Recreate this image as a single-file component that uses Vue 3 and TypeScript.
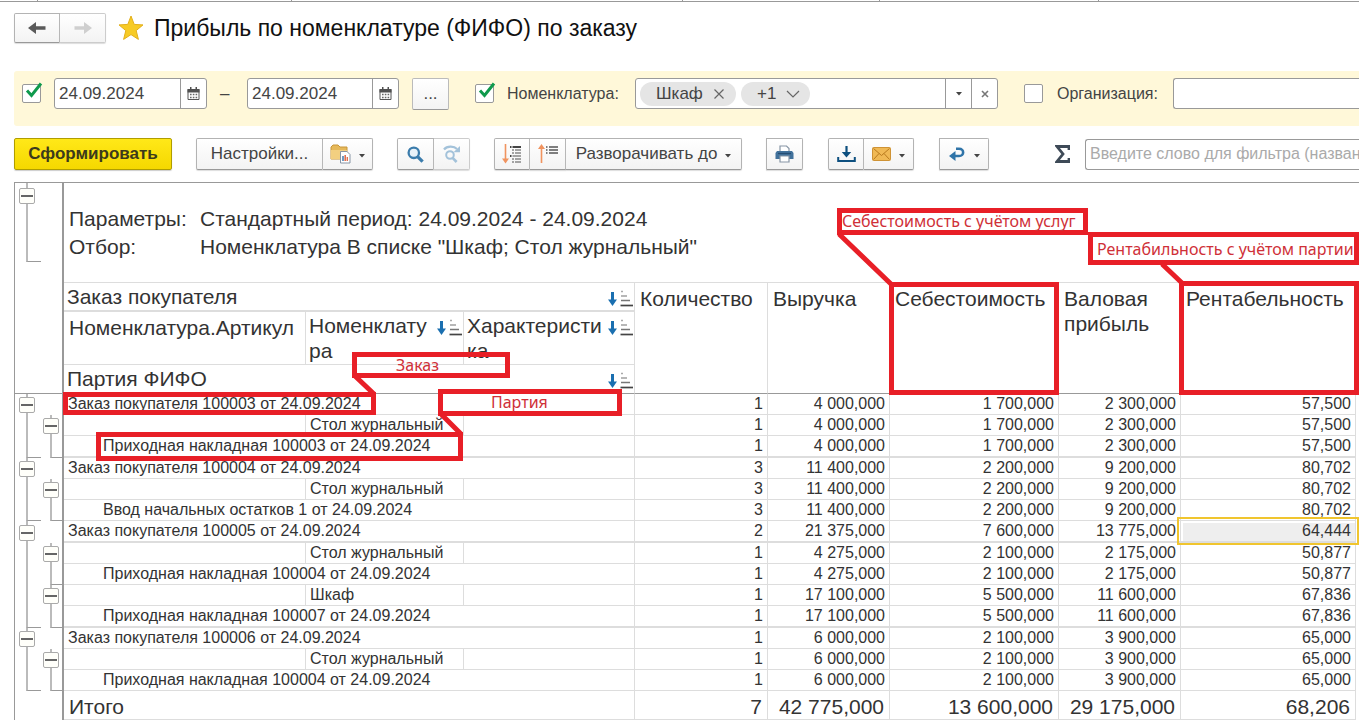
<script setup lang="ts">
interface Row {
  level: 1 | 2 | 3
  label: string
  values: string[]
  outer: 'start' | 'mid' | 'end'
  inner: 'none' | 'start' | 'end'
  selected?: boolean
}

const row = (level: Row['level'], label: string, outer: Row['outer'], inner: Row['inner'], ...values: string[]): Row => ({
  level,
  label,
  outer,
  inner,
  values,
})

const rows: Row[] = [
  row(1, 'Заказ покупателя 100003 от 24.09.2024', 'start', 'none', '1', '4 000,000', '1 700,000', '2 300,000', '57,500'),
  row(2, 'Стол журнальный', 'mid', 'start', '1', '4 000,000', '1 700,000', '2 300,000', '57,500'),
  row(3, 'Приходная накладная 100003 от 24.09.2024', 'end', 'end', '1', '4 000,000', '1 700,000', '2 300,000', '57,500'),
  row(1, 'Заказ покупателя 100004 от 24.09.2024', 'start', 'none', '3', '11 400,000', '2 200,000', '9 200,000', '80,702'),
  row(2, 'Стол журнальный', 'mid', 'start', '3', '11 400,000', '2 200,000', '9 200,000', '80,702'),
  row(3, 'Ввод начальных остатков 1 от 24.09.2024', 'end', 'end', '3', '11 400,000', '2 200,000', '9 200,000', '80,702'),
  { ...row(1, 'Заказ покупателя 100005 от 24.09.2024', 'start', 'none', '2', '21 375,000', '7 600,000', '13 775,000', '64,444'), selected: true },
  row(2, 'Стол журнальный', 'mid', 'start', '1', '4 275,000', '2 100,000', '2 175,000', '50,877'),
  row(3, 'Приходная накладная 100004 от 24.09.2024', 'mid', 'end', '1', '4 275,000', '2 100,000', '2 175,000', '50,877'),
  row(2, 'Шкаф', 'mid', 'start', '1', '17 100,000', '5 500,000', '11 600,000', '67,836'),
  row(3, 'Приходная накладная 100007 от 24.09.2024', 'end', 'end', '1', '17 100,000', '5 500,000', '11 600,000', '67,836'),
  row(1, 'Заказ покупателя 100006 от 24.09.2024', 'start', 'none', '1', '6 000,000', '2 100,000', '3 900,000', '65,000'),
  row(2, 'Стол журнальный', 'mid', 'start', '1', '6 000,000', '2 100,000', '3 900,000', '65,000'),
  row(3, 'Приходная накладная 100004 от 24.09.2024', 'end', 'end', '1', '6 000,000', '2 100,000', '3 900,000', '65,000'),
]

const thickRows = [2, 6, 10]
const totals = ['7', '42 775,000', '13 600,000', '29 175,000', '68,206']
</script>

<template>
  <div class="page">
    <div class="tabs">
      <span class="tab first"></span><span class="tab second"></span><span class="tab third"></span><span class="tab fourth"></span><span class="tab fifth"></span>
    </div>

    <header class="title-bar">
      <div class="group nav">
        <button class="btn" type="button" aria-label="Назад">
          <svg width="18" height="14" viewBox="0 0 18 14"><path d="M0 7 L8 1 V5.2 H17.5 V8.8 H8 V13 Z" fill="#5a5a5a" /></svg>
        </button>
        <button class="btn light" type="button" aria-label="Вперед">
          <svg width="18" height="14" viewBox="0 0 18 14"><path d="M18 7 L10 1 V5.2 H0.5 V8.8 H10 V13 Z" fill="#cfcfcf" /></svg>
        </button>
      </div>
      <svg class="star" width="26" height="26" viewBox="0 0 26 26">
        <path d="M13 1 L16.2 9.4 L25 9.9 L18.2 15.6 L20.4 24.4 L13 19.6 L5.6 24.4 L7.8 15.6 L1 9.9 L9.8 9.4 Z" fill="#f7cb25" stroke="#e3b01c" stroke-width="1" />
      </svg>
      <h1>Прибыль по номенклатуре (ФИФО) по заказу</h1>
    </header>

    <section class="filters">
      <span class="check">
        <input type="checkbox" checked aria-label="Период" />
        <svg width="18" height="18" viewBox="0 0 18 18"><path d="M2 8.5 L6.5 13.5 L16 1.5" fill="none" stroke="#0f9a4c" stroke-width="3" /></svg>
      </span>
      <div class="field date">
        <input type="text" value="24.09.2024" aria-label="Начало периода" />
        <button type="button" aria-label="Выбрать дату">
          <svg width="13" height="14" viewBox="0 0 13 14"><path d="M1 2.5 H12 V12.5 H1 Z" fill="#fff" stroke="#555" /><path d="M0.5 2 H12.5 V5.5 H0.5 Z M3 0 H4.5 V3 H3 Z M8.5 0 H10 V3 H8.5 Z" fill="#505050" /><path d="M3 7.5 H10.5 M3 10.5 H10.5" stroke="#666" stroke-width="1.6" stroke-dasharray="1.6 1.2" /></svg>
        </button>
      </div>
      <span class="dash">–</span>
      <div class="field date">
        <input type="text" value="24.09.2024" aria-label="Конец периода" />
        <button type="button" aria-label="Выбрать дату">
          <svg width="13" height="14" viewBox="0 0 13 14"><path d="M1 2.5 H12 V12.5 H1 Z" fill="#fff" stroke="#555" /><path d="M0.5 2 H12.5 V5.5 H0.5 Z M3 0 H4.5 V3 H3 Z M8.5 0 H10 V3 H8.5 Z" fill="#505050" /><path d="M3 7.5 H10.5 M3 10.5 H10.5" stroke="#666" stroke-width="1.6" stroke-dasharray="1.6 1.2" /></svg>
        </button>
      </div>
      <button class="more" type="button">...</button>
      <span class="check item">
        <input id="use-item" type="checkbox" checked />
        <svg width="18" height="18" viewBox="0 0 18 18"><path d="M2 8.5 L6.5 13.5 L16 1.5" fill="none" stroke="#0f9a4c" stroke-width="3" /></svg>
      </span>
      <label class="item-label" for="use-item">Номенклатура:</label>
      <div class="field list">
        <div class="chips">
          <span class="chip">Шкаф
            <button type="button" aria-label="Убрать"><svg width="10" height="10" viewBox="0 0 10 10"><path d="M0.5 0.5 L9.5 9.5 M9.5 0.5 L0.5 9.5" stroke="#666" stroke-width="1.2" /></svg></button>
          </span>
          <span class="chip plus">+1
            <button type="button" aria-label="Показать все"><svg width="14" height="8" viewBox="0 0 14 8"><path d="M1 1 L7 7 L13 1" fill="none" stroke="#666" stroke-width="1.2" /></svg></button>
          </span>
        </div>
        <button type="button" aria-label="Открыть список"><svg width="6" height="4" viewBox="0 0 6 4"><path d="M0 0 H6 L3 3.6 Z" fill="#444" /></svg></button>
        <button type="button" aria-label="Очистить"><svg width="8" height="8" viewBox="0 0 8 8"><path d="M1 1 L7 7 M7 1 L1 7" stroke="#777" stroke-width="1.6" /></svg></button>
      </div>
      <span class="check org"><input id="use-org" type="checkbox" /></span>
      <label class="org-label" for="use-org">Организация:</label>
      <div class="field org-field"><input type="text" aria-label="Значение организации" /></div>
    </section>

    <nav class="toolbar">
      <button class="run" type="button">Сформировать</button>
      <div class="group settings">
        <button class="btn text-btn" type="button">Настройки...</button>
        <button class="btn drop" type="button" aria-label="Варианты отчета">
          <svg width="21" height="20" viewBox="0 0 21 20"><path d="M1 3 L3 1 H8 L10 3 H17 V15 H1 Z" fill="#e6b95a" stroke="#c8963a" /><path d="M1 6 H17 L16 15 H1 Z" fill="#f2cf80" /><path d="M10.5 7.5 H17 L20 10.5 V19 H10.5 Z" fill="#fff" stroke="#8795a5" /><path d="M13 12 V17" stroke="#4a82b5" stroke-width="1.6" /><path d="M15.2 11 V17" stroke="#e07050" stroke-width="1.6" /><path d="M17.3 13 V17" stroke="#e07050" stroke-width="1.4" /></svg>
          <svg class="caret" width="6" height="4" viewBox="0 0 6 4"><path d="M0 0 H6 L3 3.4 Z" fill="#444" /></svg>
        </button>
      </div>
      <div class="group search">
        <button class="btn" type="button" aria-label="Найти">
          <svg width="17" height="17" viewBox="0 0 17 17"><circle cx="6.8" cy="6.8" r="5.2" fill="#e8f2f9" stroke="#3b7cac" stroke-width="2.3" /><path d="M10.6 10.6 L15.6 15.6" stroke="#3b7cac" stroke-width="3.2" /></svg>
        </button>
        <button class="btn light" type="button" aria-label="Найти далее">
          <svg width="18" height="18" viewBox="0 0 18 18"><circle cx="7" cy="10" r="3.8" fill="none" stroke="#a3c2da" stroke-width="2" /><path d="M9.6 12.8 L13.6 17" stroke="#a3c2da" stroke-width="2.6" /><path d="M1 4.5 C4 0.8 11 0.8 14 4" fill="none" stroke="#a3c2da" stroke-width="2.2" /><path d="M10.5 7.2 H17 V1 Z" fill="#a3c2da" /></svg>
        </button>
      </div>
      <div class="group expand">
        <button class="btn" type="button" aria-label="Развернуть группы">
          <svg width="20" height="20" viewBox="0 0 20 20"><path d="M3.5 0 V17" stroke="#f0935f" stroke-width="1.6" /><path d="M0 14.5 H7 L3.5 19.5 Z" fill="#f0935f" /><path d="M8 3 H9.5 M10.5 3 H19 M8 12 H9.5" stroke="#444" stroke-width="1.8" /><path d="M10 6 H12 M13 6 H19 M10 9 H12 M13 9 H19 M10.5 12 H19 M10 15 H12 M13 15 H19 M10 18 H12 M13 18 H19" stroke="#888" stroke-width="1.6" /></svg>
        </button>
        <button class="btn" type="button" aria-label="Свернуть группы">
          <svg width="20" height="20" viewBox="0 0 20 20"><path d="M3.5 2 V19" stroke="#f0935f" stroke-width="1.6" /><path d="M0 5 H7 L3.5 0 Z" fill="#f0935f" /><path d="M8 3 H9.5 M11 3 H20 M8 6 H9.5 M11 6 H20 M8 9 H9.5 M11 9 H20" stroke="#555" stroke-width="1.7" /></svg>
        </button>
        <button class="btn text-btn" type="button">Разворачивать до
          <svg class="caret" width="6" height="4" viewBox="0 0 6 4"><path d="M0 0 H6 L3 3.4 Z" fill="#444" /></svg>
        </button>
      </div>
      <div class="group print">
        <button class="btn" type="button" aria-label="Печать">
          <svg width="19" height="18" viewBox="0 0 19 18"><path d="M5 7 V1 H11.5 L14 3.5 V7" fill="#fff" stroke="#8795a5" stroke-width="1.2" /><path d="M2 6 H17 L18.5 8 V14 H0.5 V8 Z" fill="#41719b" /><path d="M3 8.5 H16" stroke="#254d73" stroke-width="1.2" /><path d="M5 11 H14 V17 H5 Z" fill="#fff" stroke="#8795a5" stroke-width="1.2" /></svg>
        </button>
      </div>
      <div class="group save">
        <button class="btn" type="button" aria-label="Сохранить">
          <svg width="19" height="17" viewBox="0 0 19 17"><path d="M9.5 0 V8" stroke="#0d4f7f" stroke-width="2.2" /><path d="M4.8 6 H14.2 L9.5 11.5 Z" fill="#0d4f7f" /><path d="M1.2 11 V15 H17.8 V11" fill="none" stroke="#0d4f7f" stroke-width="2" /></svg>
        </button>
        <button class="btn drop" type="button" aria-label="Отправить">
          <svg width="19" height="14" viewBox="0 0 19 14"><rect x="0.5" y="0.5" width="18" height="13" rx="1" fill="#f0b955" stroke="#cf9335" /><path d="M1.5 1.5 L9.5 8.5 L17.5 1.5 M1.5 12.5 L7 6.5 M17.5 12.5 L12 6.5" fill="none" stroke="#b97a1e" /></svg>
          <svg class="caret" width="6" height="4" viewBox="0 0 6 4"><path d="M0 0 H6 L3 3.4 Z" fill="#444" /></svg>
        </button>
      </div>
      <div class="group back">
        <button class="btn drop" type="button" aria-label="Расшифровка">
          <svg width="16" height="14" viewBox="0 0 16 14"><path d="M7 1.8 H10 C15.5 1.8 15.5 9 10 9 H5" fill="none" stroke="#2f74a8" stroke-width="2.6" /><path d="M0 9 L6.5 4 V14 Z" fill="#2f74a8" /></svg>
          <svg class="caret" width="6" height="4" viewBox="0 0 6 4"><path d="M0 0 H6 L3 3.4 Z" fill="#444" /></svg>
        </button>
      </div>
      <svg class="sigma" width="15" height="18" viewBox="0 0 15 18"><path d="M14 5 V1.5 H2 L8 9 L2 16.5 H14 V13" fill="none" stroke="#3e4a57" stroke-width="2.8" /></svg>
      <div class="field search-field"><input type="text" placeholder="Введите слово для фильтра (название товара, покупателя и пр.)" aria-label="Фильтр" /></div>
    </nav>

    <main class="report">
      <div class="params">
        <div class="tree-pane"><button class="fold" type="button" aria-label="Свернуть параметры"></button></div>
        <dl>
          <dt>Параметры:</dt><dd>Стандартный период: 24.09.2024 - 24.09.2024</dd>
          <dt>Отбор:</dt><dd>Номенклатура В списке "Шкаф; Стол журнальный"</dd>
        </dl>
      </div>

      <table>
        <colgroup>
          <col class="c-tree" /><col class="c-tree-in" /><col class="c-article" /><col class="c-item" /><col class="c-kind" />
          <col class="c-qty" /><col class="c-sales" /><col class="c-cost" /><col class="c-gross" /><col />
        </colgroup>
        <thead>
          <tr class="h1">
            <td class="gutter" colspan="2" rowspan="3"></td>
            <th colspan="3"><div class="sortable"><span>Заказ покупателя</span>
              <svg class="sort" width="25" height="17" viewBox="0 0 25 17"><path d="M4.5 2 V11" stroke="#1a6fb0" stroke-width="3" /><path d="M0 9.5 H9 L4.5 16 Z" fill="#1a6fb0" /><path d="M13 1.5 H15" stroke="#aaa" stroke-width="1.4" /><path d="M13 6 H19" stroke="#999" stroke-width="1.4" /><path d="M13 10.5 H22" stroke="#777" stroke-width="1.5" /><path d="M12.5 15.5 H25" stroke="#444" stroke-width="1.7" /></svg>
            </div></th>
            <th rowspan="3">Количество</th>
            <th rowspan="3">Выручка</th>
            <th rowspan="3">Себестоимость</th>
            <th rowspan="3">Валовая прибыль</th>
            <th rowspan="3">Рентабельность</th>
          </tr>
          <tr class="h2">
            <th class="article">Номенклатура.Артикул</th>
            <th v-for="name in ['Номенклатура', 'Характеристика']" :key="name"><div class="sortable"><span>{{ name }}</span>
              <svg class="sort" width="25" height="17" viewBox="0 0 25 17"><path d="M4.5 2 V11" stroke="#1a6fb0" stroke-width="3" /><path d="M0 9.5 H9 L4.5 16 Z" fill="#1a6fb0" /><path d="M13 1.5 H15" stroke="#aaa" stroke-width="1.4" /><path d="M13 6 H19" stroke="#999" stroke-width="1.4" /><path d="M13 10.5 H22" stroke="#777" stroke-width="1.5" /><path d="M12.5 15.5 H25" stroke="#444" stroke-width="1.7" /></svg>
            </div></th>
          </tr>
          <tr class="h3">
            <th colspan="3"><div class="sortable"><span>Партия ФИФО</span>
              <svg class="sort" width="25" height="17" viewBox="0 0 25 17"><path d="M4.5 2 V11" stroke="#1a6fb0" stroke-width="3" /><path d="M0 9.5 H9 L4.5 16 Z" fill="#1a6fb0" /><path d="M13 1.5 H15" stroke="#aaa" stroke-width="1.4" /><path d="M13 6 H19" stroke="#999" stroke-width="1.4" /><path d="M13 10.5 H22" stroke="#777" stroke-width="1.5" /><path d="M12.5 15.5 H25" stroke="#444" stroke-width="1.7" /></svg>
            </div></th>
          </tr>
        </thead>
        <tbody>
          <tr v-for="(r, i) in rows" :key="i" :class="{ thick: thickRows.includes(i) }">
            <td class="tree" :class="r.outer"><button v-if="r.outer === 'start'" class="fold" type="button" aria-label="Свернуть заказ"></button></td>
            <td class="tree inner" :class="r.inner"><button v-if="r.inner === 'start'" class="fold" type="button" aria-label="Свернуть номенклатуру"></button></td>
            <template v-if="r.level === 2">
              <td></td><td class="label">{{ r.label }}</td><td></td>
            </template>
            <td v-else colspan="3" :class="r.level === 3 ? 'label deep' : 'label'">{{ r.label }}</td>
            <td v-for="(v, k) in r.values" :key="k" class="num" :class="{ selected: r.selected && k === 4 }">{{ v }}</td>
          </tr>
        </tbody>
        <tfoot>
          <tr>
            <td class="gutter" colspan="2"></td>
            <td colspan="3" class="label">Итого</td>
            <td v-for="(v, k) in totals" :key="k" class="num">{{ v }}</td>
          </tr>
        </tfoot>
      </table>

      <div class="note n-cost">Себестоимость с учётом услуг</div>
      <div class="note n-profit">Рентабильность с учётом партии</div>
      <div class="note n-order">Заказ</div>
      <div class="note n-batch">Партия</div>
      <div class="note m-cost"></div>
      <div class="note m-profit"></div>
      <div class="note m-order"></div>
      <div class="note m-batch"></div>
      <svg class="links" width="1359" height="300" viewBox="0 0 1359 300">
        <path d="M839 52 L891 102 M1162 82 L1182 101 M355 194 L374 212 M441 232 L461 252" stroke="#e81f27" stroke-width="5" />
      </svg>
    </main>
  </div>
</template>

<style>
html,
body {
  background: #fff;
  overflow: hidden;
}
</style>

<style scoped>
* {
  box-sizing: border-box;
}
.page {
  font-family: "Liberation Sans", Arial, sans-serif;
  font-size: 17px;
  color: #444;
  overflow: hidden;
}
button,
input {
  font: inherit;
  color: inherit;
  margin: 0;
  padding: 0;
  border: 0;
  background: none;
}
svg {
  display: block;
  flex: none;
}
.tabs {
  display: flex;
  height: 2px;
  border-bottom: 1px solid #999;
}
.tab {
  flex: none;
  border-right: 1px solid #999;
}
.first {
  width: 38px;
}
.second {
  width: 254px;
}
.third {
  width: 391px;
}
.fourth {
  width: 197px;
}
.fifth {
  width: 219px;
}
.title-bar {
  display: flex;
  align-items: center;
  height: 52px;
  padding-left: 14px;
}
h1 {
  margin: 0 0 0 10px;
  font-size: 23px;
  font-weight: 400;
  color: #111;
  white-space: nowrap;
}
.star {
  margin-left: 12px;
}
.group {
  display: flex;
  flex: none;
}
.btn {
  display: flex;
  align-items: center;
  justify-content: center;
  width: 36px;
  height: 32px;
  border: 1px solid #b3b3b3;
  border-bottom-color: #999;
  background: linear-gradient(#fff, #f3f3f3);
  box-shadow: 0 1px 1px #ddd;
}
.btn + .btn {
  border-left: 0;
}
.btn:first-child {
  border-radius: 2px 0 0 2px;
}
.btn:last-child {
  border-radius: 0 2px 2px 0;
}
.btn.light {
  border-color: #ccc;
}
.nav .btn {
  width: 46px;
  height: 30px;
}
.filters {
  display: flex;
  align-items: center;
  height: 55px;
  margin: 17px 0 0 14px;
  padding: 0 0 10px 8px;
  background: #fff8d9;
  border-radius: 3px 0 0 3px;
}
.check {
  position: relative;
  flex: none;
  width: 19px;
  height: 19px;
}
.check input {
  display: block;
  appearance: none;
  width: 19px;
  height: 19px;
  background: #fff;
  border: 1px solid #999;
  border-radius: 2px;
}
.check svg {
  position: absolute;
  left: 3px;
  top: -2px;
}
.field {
  display: flex;
  flex: none;
  height: 31px;
  border: 1px solid #999;
  border-radius: 3px;
  background: #fff;
  overflow: hidden;
}
.field > input {
  flex: 1;
  min-width: 0;
  padding-left: 4px;
  outline: 0;
}
.field > button {
  display: flex;
  align-items: center;
  justify-content: center;
  width: 26px;
  border-left: 1px solid #999;
}
.date {
  width: 153px;
  margin-left: 13px;
}
.dash {
  width: 27px;
  margin-left: 13px;
}
.dash + .date {
  width: 152px;
  margin-left: 0;
}
.more {
  flex: none;
  width: 37px;
  height: 32px;
  margin-left: 13px;
  border: 1px solid #bbb;
  border-bottom-color: #999;
  border-radius: 2px;
  background: linear-gradient(#fff, #f3f3f3);
}
.item {
  margin-left: 26px;
}
.item-label,
.org-label {
  font-size: 16px;
}
.item-label {
  width: 128px;
  margin-left: 13px;
}
.list {
  width: 363px;
}
.chips {
  display: flex;
  flex: 1;
  align-items: center;
  gap: 5px;
  padding-left: 4px;
}
.chip {
  display: flex;
  align-items: center;
  justify-content: space-between;
  width: 96px;
  height: 24px;
  padding: 0 12px 0 16px;
  border-radius: 12px;
  background: #e5e5e5;
}
.chip.plus {
  width: 69px;
  padding-right: 10px;
}
.org {
  margin-left: 26px;
}
.org-label {
  width: 116px;
  margin-left: 14px;
}
.org-field {
  flex: 1;
  border-right: 0;
  border-radius: 3px 0 0 3px;
}
.toolbar {
  display: flex;
  align-items: center;
  height: 56px;
  padding-left: 14px;
}
.run {
  flex: none;
  width: 158px;
  height: 32px;
  border: 1px solid #b09d00;
  border-radius: 2px;
  background: linear-gradient(#ffe818, #f5d800);
  color: #3d3a1c;
  font-weight: 700;
  box-shadow: 0 1px 1px #ccc;
}
.settings {
  margin-left: 24px;
}
.settings .text-btn {
  width: 127px;
}
.btn.drop {
  width: 50px;
  gap: 8px;
}
.caret {
  margin-top: 3px;
}
.search {
  margin-left: 24px;
}
.search .btn {
  width: 37px;
}
.search .light {
  width: 36px;
}
.expand {
  margin-left: 24px;
}
.expand .text-btn {
  width: 176px;
  gap: 8px;
}
.print {
  margin-left: 24px;
}
.print .btn {
  width: 37px;
}
.save,
.back {
  margin-left: 25px;
}
.back .btn.drop {
  gap: 9px;
}
.sigma {
  margin-left: 66px;
}
.search-field {
  flex: 1;
  margin-left: 15px;
  border-right: 0;
  border-radius: 3px 0 0 3px;
  font-size: 16px;
}
.search-field input::placeholder {
  color: #aaa;
  opacity: 1;
}
.report {
  position: relative;
  color: #333;
  overflow: hidden;
}
.params {
  display: flex;
  height: 100px;
  margin-left: 14px;
  border-top: 1px solid #999;
  border-left: 1px solid #999;
}
.tree-pane {
  position: relative;
  width: 49px;
  padding: 5px 0 0 4px;
  border-right: 2px solid #999;
}
.tree-pane::before {
  content: "";
  position: absolute;
  left: 11px;
  top: 0;
  width: 13px;
  height: 78px;
  border-left: 2px solid #bbb;
  border-bottom: 1px solid #999;
}
.fold {
  position: relative;
  display: block;
  width: 16px;
  height: 16px;
  border: 1px solid #aaa;
  border-radius: 2px;
  background: #fffffa linear-gradient(#666, #666) center / 12px 2px no-repeat;
}
dl {
  display: grid;
  grid-template-columns: 131px auto;
  align-content: start;
  margin: 0;
  padding: 22px 0 0 5px;
  font-size: 21px;
  line-height: 28px;
  white-space: nowrap;
}
dd {
  margin: 0;
}
table {
  width: calc(100% - 17px);
  margin-left: 14px;
  table-layout: fixed;
  border-collapse: separate;
  border-spacing: 0;
  font-size: 16px;
  line-height: 18px;
}
.c-tree { width: 25px; }
.c-tree-in { width: 25px; }
.c-article { width: 242px; }
.c-item { width: 158px; }
.c-kind { width: 171px; }
.c-qty { width: 133px; }
.c-sales { width: 122px; }
.c-cost { width: 169px; }
.c-gross { width: 122px; }
th,
td {
  padding: 0;
  border-right: 1px solid #ddd;
  border-bottom: 1px solid #ddd;
  white-space: nowrap;
}
th {
  padding: 3px 0 0 5px;
  font-size: 21px;
  font-weight: 400;
  line-height: 25px;
  text-align: left;
  vertical-align: top;
  white-space: normal;
}
th[rowspan] {
  border-top: 1px solid #ddd;
  border-bottom-color: #999;
}
.h1 th:nth-child(2) {
  padding: 1px 0 0 3px;
  border-top: 1px solid #ddd;
  border-bottom-width: 2px;
}
.h1 {
  height: 30px;
}
.h2 {
  height: 53px;
}
.h2 th {
  padding: 1px 0 0 3px;
}
.h2 th.article {
  padding: 3px 0 0 5px;
}
.h3 {
  height: 29px;
}
.h3 th {
  padding: 1px 0 0 3px;
  border-bottom-color: #999;
}
.sortable {
  display: flex;
  justify-content: space-between;
}
.sortable span {
  flex: 1;
  min-width: 0;
  padding-right: 4px;
  overflow-wrap: anywhere;
}
.sort {
  margin: 6px 1px 0 0;
}
.gutter {
  border-left: 1px solid #999;
  border-right: 2px solid #999;
  border-bottom-color: #999;
}
tbody tr {
  height: 21px;
}
tbody tr.thick {
  height: 22px;
}
.thick td {
  border-bottom-width: 2px;
}
.label {
  padding-left: 4px;
}
.label.deep {
  padding-left: 39px;
}
.num {
  padding-right: 4px;
  text-align: right;
}
tbody .tree {
  position: relative;
  padding: 1px 0 0 4px;
  border-left: 1px solid #999;
  border-right: 0;
  border-bottom: 0;
  vertical-align: middle;
}
tbody .tree.inner {
  border-left: 0;
  border-right: 2px solid #999;
}
.tree::before {
  content: "";
  position: absolute;
  left: 11px;
  top: 0;
  bottom: 0;
  width: 13px;
  border-left: 2px solid #bbb;
}
.tree.inner::before {
  width: 12px;
}
.tree.none::before {
  display: none;
}
.tree.end::before {
  border-bottom: 1px solid #999;
}
.selected {
  position: relative;
  background: #eee;
  box-shadow: inset 2px 2px #fff;
}
.selected::after {
  content: "";
  position: absolute;
  inset: -4px;
  border: 2px solid #f0c52e;
}
tfoot td {
  height: 29px;
  padding-top: 3px;
  font-size: 21px;
}
tfoot .gutter {
  border-bottom: 0;
}
tfoot .label {
  padding-left: 5px;
}
tfoot .num {
  padding-right: 5px;
}
.note {
  position: absolute;
  border: 5px solid #e81f27;
  color: #cf3038;
  font-family: "Noto Sans", sans-serif;
  font-size: 16px;
  line-height: 16px;
  white-space: nowrap;
}
.n-cost { left: 837px; top: 26px; width: 251px; height: 27px; }
.n-profit { left: 1088px; top: 50px; width: 271px; height: 33px; padding: 4px 0 0 4px; }
.n-order { left: 352px; top: 170px; width: 158px; height: 26px; padding-left: 39px; }
.n-batch { left: 438px; top: 207px; width: 184px; height: 27px; padding-left: 48px; }
.m-cost { left: 889px; top: 100px; width: 170px; height: 113px; }
.m-profit { left: 1179px; top: 99px; width: 180px; height: 114px; }
.m-order { left: 63px; top: 210px; width: 313px; height: 23px; }
.m-batch { left: 96px; top: 250px; width: 367px; height: 29px; }
.links {
  position: absolute;
  left: 0;
  top: 0;
  pointer-events: none;
}
</style>
